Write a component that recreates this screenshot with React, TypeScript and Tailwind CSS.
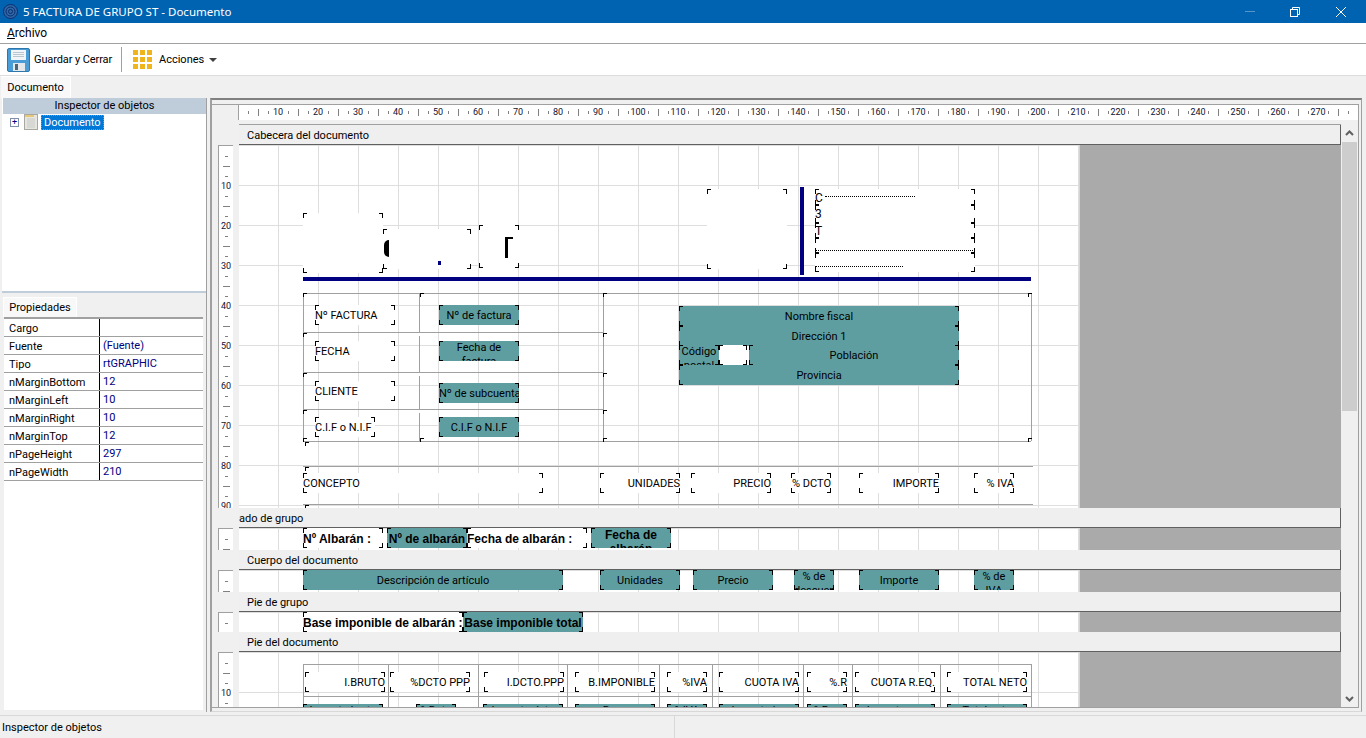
import { ReactNode } from "react";

const ORIGIN_X = 239;

type Cell = {
  x: number;
  y: number;
  w: number;
  h?: number;
  text?: string;
  teal?: boolean;
  bold?: boolean;
  wrap?: boolean;
  tight?: boolean;
  align?: "left" | "center" | "right";
};

type Line = [number, number, number, number];

const properties = [
  ["Cargo", ""],
  ["Fuente", "(Fuente)"],
  ["Tipo", "rtGRAPHIC"],
  ["nMarginBottom", "12"],
  ["nMarginLeft", "10"],
  ["nMarginRight", "10"],
  ["nMarginTop", "12"],
  ["nPageHeight", "297"],
  ["nPageWidth", "210"],
];

const headerCells: Cell[] = [
  { x: 303, y: 213, w: 80, h: 60 },
  { x: 383, y: 229, w: 88, h: 40 },
  { x: 479, y: 225, w: 40, h: 43 },
  { x: 707, y: 189, w: 80, h: 80 },
  { x: 815, y: 189, w: 160, h: 16 },
  { x: 815, y: 205, w: 160, h: 18 },
  { x: 815, y: 223, w: 160, h: 15 },
  { x: 815, y: 238, w: 160, h: 15 },
  { x: 815, y: 253, w: 160, h: 19 },
  { x: 315, y: 305, w: 80, text: "Nº FACTURA", align: "left" },
  { x: 315, y: 341, w: 80, text: "FECHA", align: "left" },
  { x: 315, y: 381, w: 80, text: "CLIENTE", align: "left" },
  { x: 315, y: 417, w: 60, text: "C.I.F o N.I.F", align: "left" },
  { x: 439, y: 305, w: 80, text: "Nº de factura", teal: true },
  { x: 439, y: 341, w: 80, text: "Fecha de factura", teal: true, wrap: true },
  { x: 439, y: 383, w: 80, text: "Nº de subcuenta", teal: true },
  { x: 439, y: 417, w: 80, text: "C.I.F o N.I.F", teal: true },
  { x: 679, y: 306, w: 280, text: "Nombre fiscal", teal: true },
  { x: 679, y: 326, w: 280, text: "Dirección 1", teal: true },
  { x: 679, y: 345, w: 40, text: "Código postal", teal: true, wrap: true },
  { x: 719, y: 345, w: 28 },
  { x: 749, y: 345, w: 210, text: "Población", teal: true },
  { x: 679, y: 365, w: 280, text: "Provincia", teal: true },
  { x: 303, y: 473, w: 240, text: "CONCEPTO", align: "left" },
  { x: 600, y: 473, w: 80, text: "UNIDADES", align: "right" },
  { x: 691, y: 473, w: 80, text: "PRECIO", align: "right" },
  { x: 791, y: 473, w: 40, text: "% DCTO", align: "right" },
  { x: 859, y: 473, w: 80, text: "IMPORTE", align: "right" },
  { x: 974, y: 473, w: 40, text: "% IVA", align: "right" },
];

const headerLines: Line[] = [
  [303, 293, 728, 1],
  [303, 332, 300, 1],
  [303, 372, 300, 1],
  [303, 409, 300, 1],
  [303, 441, 728, 1],
  [303, 293, 1, 148],
  [419, 293, 1, 39],
  [419, 336, 1, 36],
  [419, 376, 1, 33],
  [419, 413, 1, 28],
  [603, 293, 1, 148],
  [1031, 293, 1, 148],
  [303, 466, 730, 1],
  [303, 504, 730, 1],
];

const headerMarks: [number, number][] = [
  [303, 293], [420, 293], [603, 293], [1028, 293], [303, 333], [603, 333], [303, 373], [603, 373],
  [303, 410], [603, 410], [303, 438], [420, 438], [603, 438], [1028, 438], [305, 442], [305, 467], [305, 505],
];

const groupHeadCells: Cell[] = [
  { x: 303, y: 528, w: 80, text: "Nº Albarán :", bold: true, align: "left" },
  { x: 387, y: 528, w: 80, text: "Nº de albarán", bold: true, teal: true },
  { x: 467, y: 528, w: 120, text: "Fecha de albarán :", bold: true, align: "left" },
  { x: 591, y: 528, w: 80, text: "Fecha de albarán", bold: true, teal: true, wrap: true },
];

const bodyCells: Cell[] = [
  { x: 303, y: 570, w: 260, text: "Descripción de artículo", teal: true },
  { x: 600, y: 570, w: 80, text: "Unidades", teal: true },
  { x: 693, y: 570, w: 80, text: "Precio", teal: true },
  { x: 794, y: 570, w: 40, text: "% de descuento", teal: true, wrap: true },
  { x: 859, y: 570, w: 80, text: "Importe", teal: true },
  { x: 974, y: 570, w: 40, text: "% de IVA", teal: true, wrap: true },
];

const groupFootCells: Cell[] = [
  { x: 303, y: 612, w: 160, text: "Base imponible de albarán :", bold: true, align: "left" },
  { x: 463, y: 612, w: 120, text: "Base imponible total", bold: true, teal: true },
];

const docFootCells: Cell[] = [
  { x: 305, y: 672, w: 80, text: "I.BRUTO", align: "right" },
  { x: 390, y: 672, w: 80, text: "%DCTO PPP", align: "right" },
  { x: 484, y: 672, w: 80, text: "I.DCTO.PPP", align: "right" },
  { x: 575, y: 672, w: 80, text: "B.IMPONIBLE", align: "right" },
  { x: 667, y: 672, w: 40, text: "%IVA", align: "right" },
  { x: 719, y: 672, w: 80, text: "CUOTA IVA", align: "right" },
  { x: 807, y: 672, w: 40, text: "%.R", align: "right" },
  { x: 855, y: 672, w: 80, text: "CUOTA R.EQ.", align: "right" },
  { x: 947, y: 672, w: 80, text: "TOTAL NETO", align: "right" },
  { x: 303, y: 704, w: 80, text: "Importe bruto", teal: true, tight: true },
  { x: 416, y: 704, w: 40, text: "%Dcto", teal: true, tight: true },
  { x: 483, y: 704, w: 80, text: "Importe dcto", teal: true, tight: true },
  { x: 575, y: 704, w: 80, text: "Base", teal: true, tight: true },
  { x: 667, y: 704, w: 40, text: "%IVA", teal: true, tight: true },
  { x: 719, y: 704, w: 80, text: "Importe iva", teal: true, tight: true },
  { x: 807, y: 704, w: 40, text: "%Rec", teal: true, tight: true },
  { x: 855, y: 704, w: 80, text: "Importe rec", teal: true, tight: true },
  { x: 947, y: 704, w: 80, text: "Total neto", teal: true, tight: true },
];

const docFootLines: Line[] = [
  [303, 664, 728, 1],
  [303, 696, 728, 1],
  ...[303, 388, 478, 567, 659, 712, 803, 852, 940, 1031].map((x): Line => [x, 664, 1, 44]),
];

function Corners() {
  return (
    <>
      <span className="absolute left-0 top-0 h-[5px] w-[4px] border-l border-t border-black" />
      <span className="absolute right-0 top-0 h-[5px] w-[4px] border-r border-t border-black" />
      <span className="absolute bottom-0 left-0 h-[5px] w-[4px] border-b border-l border-black" />
      <span className="absolute bottom-0 right-0 h-[5px] w-[4px] border-b border-r border-black" />
    </>
  );
}

function Field({ cell, top }: { cell: Cell; top: number }) {
  const h = cell.h ?? 20;
  const leading = cell.tight
    ? "whitespace-nowrap leading-[13px]"
    : cell.wrap
      ? "whitespace-normal leading-[14px]"
      : "whitespace-nowrap leading-[22px]";
  return (
    <div
      className={`absolute ${cell.teal ? "bg-[#5f9ea0]" : "bg-white"}`}
      style={{ left: cell.x - ORIGIN_X, top: cell.y - top, width: cell.w, height: h }}
    >
      {cell.text && (
        <div
          className={`h-full w-full overflow-hidden text-black ${leading} ${
            cell.align === "left" ? "text-left" : cell.align === "right" ? "text-right" : "text-center"
          } ${cell.bold ? "font-['Liberation_Sans',sans-serif] text-[12px] font-bold" : ""}`}
        >
          {cell.text}
        </div>
      )}
      <Corners />
    </div>
  );
}

function Lines({ lines, top }: { lines: Line[]; top: number }) {
  return (
    <>
      {lines.map(([x, y, w, h]) => (
        <div
          key={`${x}-${y}-${w}-${h}`}
          className="absolute bg-[#a0a0a0]"
          style={{ left: x - ORIGIN_X, top: y - top, width: w, height: h }}
        />
      ))}
    </>
  );
}

function SideRuler({ height, labels }: { height: number; labels: boolean }) {
  const count = Math.floor(height / 10);
  return (
    <div className="mx-[6px] flex w-[15px] flex-col overflow-hidden border-l border-t border-[#a0a0a0] bg-white pt-[5px]">
      {Array.from({ length: count }, (_, i) => i + 1).map((n) => (
        <div key={n} className="flex h-[10px] shrink-0 items-center justify-center">
          {labels && n % 4 === 0 ? (
            <span className="text-[9px] leading-[10px] text-[#101030]">{(n / 4) * 10}</span>
          ) : n % 4 === 2 ? (
            <span className="h-px w-[7px] bg-[#808080]" />
          ) : (
            <span className="h-px w-[3px] bg-[#808080]" />
          )}
        </div>
      ))}
    </div>
  );
}

function Band({
  label,
  labelClass,
  height,
  children,
}: {
  label: string;
  labelClass?: string;
  height: number;
  children?: ReactNode;
}) {
  return (
    <div className="flex flex-col">
      <div className="flex h-[20px] pl-[27px]">
        <div className={`flex flex-1 items-center border-b border-r border-[#606060] bg-[#efefef] pt-[3px] ${labelClass ?? "pl-[8px]"}`}>
          {label}
        </div>
      </div>
      <div className="flex" style={{ height }}>
        <SideRuler height={height} labels={height > 30} />
        <div className="relative w-[840px] overflow-hidden bg-white bg-[linear-gradient(to_right,#dedede_1px,transparent_1px),linear-gradient(to_bottom,#dedede_1px,transparent_1px)] bg-[size:40px_40px] bg-[position:39px_0px]">
          {children}
        </div>
        <div className="flex-1 border-l border-[#d4d4d4] bg-[#aaaaaa]" />
      </div>
    </div>
  );
}

function TopRuler() {
  return (
    <div className="ml-[26px] flex h-[15px] overflow-hidden border-l border-[#a0a0a0] bg-white pl-[4px]">
      {Array.from({ length: 111 }, (_, i) => i + 1).map((n) => (
        <div key={n} className="flex h-full w-[10px] shrink-0 items-center justify-center">
          {n % 4 === 0 ? (
            <span className="text-[9px] leading-none text-[#101030]">{(n / 4) * 10}</span>
          ) : n % 4 === 2 ? (
            <span className="h-[7px] w-px bg-[#808080]" />
          ) : (
            <span className="h-[3px] w-px bg-[#808080]" />
          )}
        </div>
      ))}
    </div>
  );
}

function SaveIcon() {
  return (
    <svg width="23" height="24" viewBox="0 0 23 24">
      <rect x="0.5" y="0.5" width="22" height="23" rx="1.5" fill="#4a9cd6" stroke="#2f77ab" />
      <rect x="4" y="2" width="15" height="10" fill="#f2f5f7" />
      <path d="M6 4.5h11M6 6.5h11M6 8.5h11" stroke="#b8c6d0" />
      <rect x="6" y="15" width="12" height="8" fill="#e4e8eb" />
      <rect x="8" y="16" width="3" height="6" fill="#4c6378" />
    </svg>
  );
}

function ActionsIcon() {
  return (
    <div className="grid grid-cols-3 gap-[2px]">
      {Array.from({ length: 9 }, (_, i) => (
        <span key={i} className="h-[5px] w-[5px] bg-[#f0b41c]" />
      ))}
    </div>
  );
}

function AppIcon() {
  return (
    <svg width="15" height="15" viewBox="0 0 15 15" fill="none" stroke="#0a2f6c">
      <circle cx="7.5" cy="7.5" r="7" fill="#2f66a8" />
      <circle cx="7.5" cy="7.5" r="4.5" />
      <circle cx="7.5" cy="7.5" r="2" />
    </svg>
  );
}

function DocIcon() {
  return (
    <svg width="14" height="16" viewBox="0 0 14 16">
      <rect x="0.5" y="0.5" width="13" height="15" fill="#e6e6e0" stroke="#a8a8a0" />
      <rect x="1" y="1" width="9" height="2" fill="#e8c878" />
      <path d="M3 5h8M3 7h8M3 9h8M3 11h8M3 13h8" stroke="#c8c8c8" />
    </svg>
  );
}

function TitleBar() {
  return (
    <div className="flex h-[23px] items-center bg-[#0063b1] pl-[3px] text-white">
      <AppIcon />
      <span className="ml-[5px] font-['Noto_Sans',sans-serif] text-[11.5px]">5 FACTURA DE GRUPO ST - Documento</span>
      <div className="ml-auto flex items-center pr-[20px]">
        <span className="mr-[35px] h-px w-[10px] bg-[#5a95c8]" />
        <svg className="mr-[36px]" width="10" height="10" viewBox="0 0 10 10" fill="none" stroke="white">
          <rect x="0.5" y="2.5" width="7" height="7" />
          <path d="M2.5 2.5v-2h7v7h-2" />
        </svg>
        <svg width="10" height="10" viewBox="0 0 10 10" stroke="white">
          <path d="M0 0l10 10M10 0L0 10" />
        </svg>
      </div>
    </div>
  );
}

function PropertyPanel() {
  return (
    <div className="flex min-h-0 flex-1 flex-col">
      <div className="mt-[4px] flex h-[20px] pl-px">
        <div className="flex w-[74px] items-center justify-center border-x border-t border-white bg-[#f8f8f8] pt-px">
          Propiedades
        </div>
      </div>
      <div className="mb-[2px] ml-[2px] mr-[3px] flex-1 border-t-2 border-[#a0a0a0] bg-white">
        {properties.map(([name, value]) => (
          <div key={name} className="flex h-[18px] items-center border-b border-[#a0a0a0] leading-[19px]">
            <div className="h-full w-[96px] border-r border-black pl-[5px]">{name}</div>
            <div className="pl-[3px] text-[#000080]">{value}</div>
          </div>
        ))}
      </div>
    </div>
  );
}

function Scrollbar() {
  return (
    <div className="flex w-[17px] flex-col items-center bg-[#f0f0f0]">
      <svg className="mt-[6px]" width="9" height="6" viewBox="0 0 9 6" fill="none" stroke="#606060" strokeWidth="2">
        <path d="M1 5l3.5-3.5L8 5" />
      </svg>
      <div className="mt-[6px] h-[269px] w-[15px] bg-[#cdcdcd]" />
      <svg className="mb-[5px] mt-auto" width="9" height="6" viewBox="0 0 9 6" fill="none" stroke="#606060" strokeWidth="2">
        <path d="M1 1l3.5 3.5L8 1" />
      </svg>
    </div>
  );
}

function Designer() {
  return (
    <div className="flex min-w-0 flex-1 flex-col border-b border-l-2 border-r border-t-2 border-b-[#d8d8d8] border-l-[#a0a0a0] border-r-[#a0a0a0] border-t-[#808080] bg-[#f0f0f0]">
      <div className="mb-[3px] mr-[2px] mt-[4px] flex min-h-0 flex-1 flex-col border-b border-r border-t border-[#a0a0a0]">
        <TopRuler />
        <div className="flex min-h-0 flex-1 pt-[4px]">
          <div className="min-w-0 flex-1 overflow-hidden">
            <div className="ml-[27px] h-px bg-[#a0a0a0]" />
            <Band label="Cabecera del documento" height={363}>
              {headerCells.map((c) => (
                <Field key={`${c.x}-${c.y}`} cell={c} top={145} />
              ))}
              <Lines lines={headerLines} top={145} />
              {headerMarks.map(([x, y]) => (
                <span
                  key={`${x}-${y}`}
                  className="absolute h-[4px] w-[4px] border-l border-t border-black"
                  style={{ left: x - ORIGIN_X, top: y - 145 }}
                />
              ))}
              <div className="absolute left-[561px] top-[42px] h-[88px] w-[4px] bg-[#000080]" />
              <div className="absolute left-[64px] top-[132px] h-[4px] w-[728px] bg-[#000080]" />
              <div className="absolute left-[145px] top-[95px] h-[17px] w-[5px] rounded-l-full bg-black" />
              <div className="absolute left-[199px] top-[116px] h-[4px] w-[3px] bg-[#000080]" />
              <div className="absolute left-[266px] top-[92px] h-[21px] w-[3px] bg-black" />
              <div className="absolute left-[266px] top-[92px] h-[2px] w-[8px] bg-black" />
              <div className="absolute left-[586px] top-[51px] h-px w-[90px] border-t border-dotted border-black" />
              <div className="absolute left-[576px] top-[105px] h-px w-[160px] border-t border-dotted border-black" />
              <div className="absolute left-[576px] top-[121px] h-px w-[88px] border-t border-dotted border-black" />
              <span className="absolute left-[576px] top-[46px] text-[12px] leading-[14px]">C</span>
              <span className="absolute left-[576px] top-[62px] text-[12px] leading-[14px]">3</span>
              <span className="absolute left-[576px] top-[79px] text-[12px] leading-[14px]">T</span>
            </Band>
            <Band label="ado de grupo" labelClass="pl-0" height={22}>
              {groupHeadCells.map((c) => (
                <Field key={c.x} cell={c} top={528} />
              ))}
            </Band>
            <Band label="Cuerpo del documento" height={22}>
              {bodyCells.map((c) => (
                <Field key={c.x} cell={c} top={570} />
              ))}
            </Band>
            <Band label="Pie de grupo" height={20}>
              {groupFootCells.map((c) => (
                <Field key={c.x} cell={c} top={612} />
              ))}
            </Band>
            <Band label="Pie del documento" height={56}>
              <Lines lines={docFootLines} top={652} />
              {docFootCells.map((c) => (
                <Field key={c.x} cell={c} top={652} />
              ))}
            </Band>
          </div>
          <Scrollbar />
        </div>
      </div>
    </div>
  );
}

export default function App() {
  return (
    <div className="flex h-screen w-screen flex-col overflow-hidden bg-[#f0f0f0] font-['Roboto',sans-serif] text-[11px] text-black">
      <TitleBar />
      <div className="flex h-[21px] items-center border-b border-[#a0a0a0] bg-white pl-[7px] text-[12px]">
        <span>
          <span className="underline">A</span>rchivo
        </span>
      </div>
      <div className="flex h-[32px] items-center border-b border-[#dcdcdc] bg-white pl-[7px]">
        <SaveIcon />
        <span className="ml-[4px] w-[78px] whitespace-nowrap pt-[2px] tracking-[-0.1px]">Guardar y Cerrar</span>
        <span className="ml-[9px] h-[25px] w-px bg-[#a0a0a0]" />
        <span className="ml-[11px]">
          <ActionsIcon />
        </span>
        <span className="ml-[7px] pt-[2px]">Acciones</span>
        <span className="ml-[5px] h-0 w-0 border-x-[4px] border-t-[4px] border-x-transparent border-t-[#404040]" />
      </div>
      <div className="flex h-[22px] pl-px">
        <div className="flex w-[70px] items-center justify-center border-r border-t border-white bg-[#f8f8f8] pt-[2px]">Documento</div>
      </div>
      <div className="flex min-h-0 flex-1 pr-[4px]">
        <div className="flex w-[206px] shrink-0 flex-col pl-[2px]">
          <div className="flex h-[193px] flex-col bg-white pl-px">
            <div className="flex h-[16px] items-center justify-center bg-[#bfcddb] pt-px">Inspector de objetos</div>
            <div className="flex items-center pl-[7px]">
              <span className="flex h-[9px] w-[9px] items-center justify-center border border-[#8090a8] text-[9px] leading-none text-[#000080]">
                +
              </span>
              <span className="ml-[5px]">
                <DocIcon />
              </span>
              <span className="ml-[3px] border border-dotted border-[#f08000] bg-[#0078d7] px-[2px] leading-[13px] text-white">Documento</span>
            </div>
          </div>
          <div className="h-[2px] bg-[#bfcddb]" />
          <PropertyPanel />
        </div>
        <div className="w-[4px] border-l border-[#a0a0a0]" />
        <Designer />
      </div>
      <div className="mt-[3px] flex h-[23px] border-t border-[#d8d8d8]">
        <div className="flex w-[675px] items-center border-r border-[#d8d8d8] pl-[2px] pt-[3px]">Inspector de objetos</div>
      </div>
    </div>
  );
}
